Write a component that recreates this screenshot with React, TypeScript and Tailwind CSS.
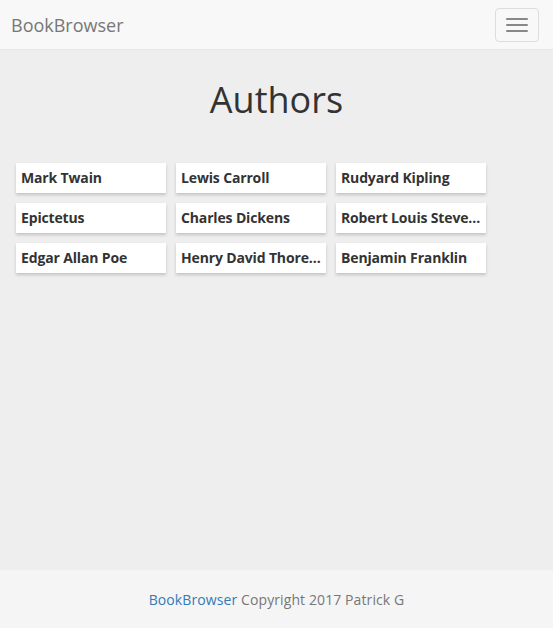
const authors = [
  'Mark Twain',
  'Lewis Carroll',
  'Rudyard Kipling',
  'Epictetus',
  'Charles Dickens',
  'Robert Louis Stevenson',
  'Edgar Allan Poe',
  'Henry David Thoreau',
  'Benjamin Franklin',
]

export default function App() {
  return (
    <div
      className="flex min-h-[628px] flex-col bg-[#eeeeee] text-[#333333]"
      style={{ fontFamily: '"Open Sans", "Liberation Sans", sans-serif' }}
    >
      {/* Navbar */}
      <nav className="flex h-[50px] items-center justify-between border-b border-[#e7e7e7] bg-[#f8f8f8] pl-[11px] pr-[14px]">
        <span className="text-[18px] leading-[20px] text-[#777777]">BookBrowser</span>
        <button className="flex h-[34px] w-[44px] flex-col items-center justify-center gap-[4px] rounded-[4px] border border-[#dddddd]">
          <span className="block h-[2px] w-[22px] rounded-[1px] bg-[#888888]" />
          <span className="block h-[2px] w-[22px] rounded-[1px] bg-[#888888]" />
          <span className="block h-[2px] w-[22px] rounded-[1px] bg-[#888888]" />
        </button>
      </nav>

      {/* Content */}
      <main className="flex-1">
        <h1 className="mt-[30px] mb-[43px] text-center text-[36px] leading-[40px] font-normal text-[#333333]">
          Authors
        </h1>
        <div className="grid grid-cols-[150px_150px_150px] gap-[10px] pl-[16px]">
          {authors.map((name) => (
            <div
              key={name}
              className="h-[30px] truncate bg-white px-[5px] text-[14px] leading-[30px] font-bold tracking-[-0.15px] text-[#333333] shadow-[0_2px_3px_rgba(0,0,0,0.18)]"
            >
              {name}
            </div>
          ))}
        </div>
      </main>

      {/* Footer */}
      <footer className="flex h-[58px] items-center justify-center bg-[#f5f5f5] text-[14px] tracking-[0.1px] text-[#777777]">
        <span>
          <a className="text-[#337ab7]">BookBrowser</a> Copyright 2017 Patrick G
        </span>
      </footer>
    </div>
  )
}
